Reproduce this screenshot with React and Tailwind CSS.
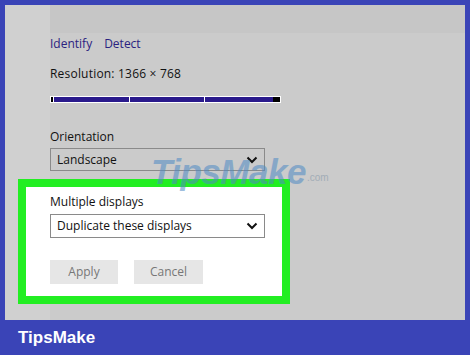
import React from "react";

function Chevron() {
  return (
    <svg width="12" height="8" viewBox="0 0 12 8" className="mr-[6px]">
      <path d="M1.5 1.5 L6 6 L10.5 1.5" fill="none" stroke="#111" strokeWidth="2" />
    </svg>
  );
}

export default function App() {
  return (
    <div className="w-[470px] h-[355px] bg-[#3a44b7] flex flex-col overflow-hidden" style={{ fontFamily: '"Open Sans", "Noto Sans", sans-serif' }}>
      <div className="mx-[5px] mt-[5px] h-[315px] bg-[#cbcbcb] flex relative">
        <div className="w-[45px] bg-[#d0d0d0]" />
        <div className="flex-1 flex flex-col">
          <div className="h-[28px] bg-[#c6c6c6]" />
          <div className="flex gap-[12px] text-[12px] text-[#2a2280] mt-[3px] leading-[16px]">
            <span>Identify</span>
            <span>Detect</span>
          </div>
          <div className="text-[12px] text-[#111] mt-[14px] leading-[16px] tracking-[0.2px]">Resolution: 1366 × 768</div>
          <div className="mt-[14px] w-[231px] h-[7px] bg-white p-[1px] flex gap-[1px]">
            <div className="w-[2px] bg-black" />
            <div className="flex-1 bg-[#2a1a8c]" />
            <div className="flex-1 bg-[#2a1a8c]" />
            <div className="flex-1 bg-[#2a1a8c] flex justify-end"><div className="w-[7px] bg-black" /></div>
          </div>
          <div className="text-[12px] text-[#111] mt-[26px] leading-[16px]">Orientation</div>
          <div className="mt-[3px] w-[215px] h-[23px] border border-[#8a8a8a] flex items-center justify-between pl-[6px] text-[12px] text-[#111]">
            <span>Landscape</span>
            <Chevron />
          </div>
          <div className="-ml-[32px] mt-[8px] w-[272px] h-[125px] border-[8px] border-[#22ee22] bg-white pl-[24px] pt-[7px] flex flex-col">
            <div className="text-[12px] text-[#111] leading-[16px]">Multiple displays</div>
            <div className="mt-[4px] w-[215px] h-[24px] border border-[#8a8a8a] flex items-center justify-between pl-[6px] text-[12px] text-[#111]">
              <span>Duplicate these displays</span>
              <Chevron />
            </div>
            <div className="mt-[22px] flex gap-[16px]">
              <div className="w-[68px] h-[24px] bg-[#e6e6e6] flex items-center justify-center text-[12px] text-[#777]">Apply</div>
              <div className="w-[69px] h-[24px] bg-[#e6e6e6] flex items-center justify-center text-[12px] text-[#777]">Cancel</div>
            </div>
          </div>
        </div>
        <div className="absolute left-[146px] top-[149px] flex items-end pointer-events-none">
          <span className="text-[35px] font-black italic text-[#4f8ac4] opacity-55 leading-none tracking-[-0.5px]" style={{ fontFamily: '"Liberation Sans", sans-serif' }}>TipsMake</span>
          <span className="text-[10px] text-[#8899aa] opacity-60 mb-[4px] ml-[1px]" style={{ fontFamily: '"Liberation Sans", sans-serif' }}>.com</span>
        </div>
      </div>
      <div className="flex-1 flex items-center pl-[18px]">
        <span className="text-white text-[17px] font-bold" style={{ fontFamily: '"Liberation Sans", sans-serif' }}>TipsMake</span>
      </div>
    </div>
  );
}
